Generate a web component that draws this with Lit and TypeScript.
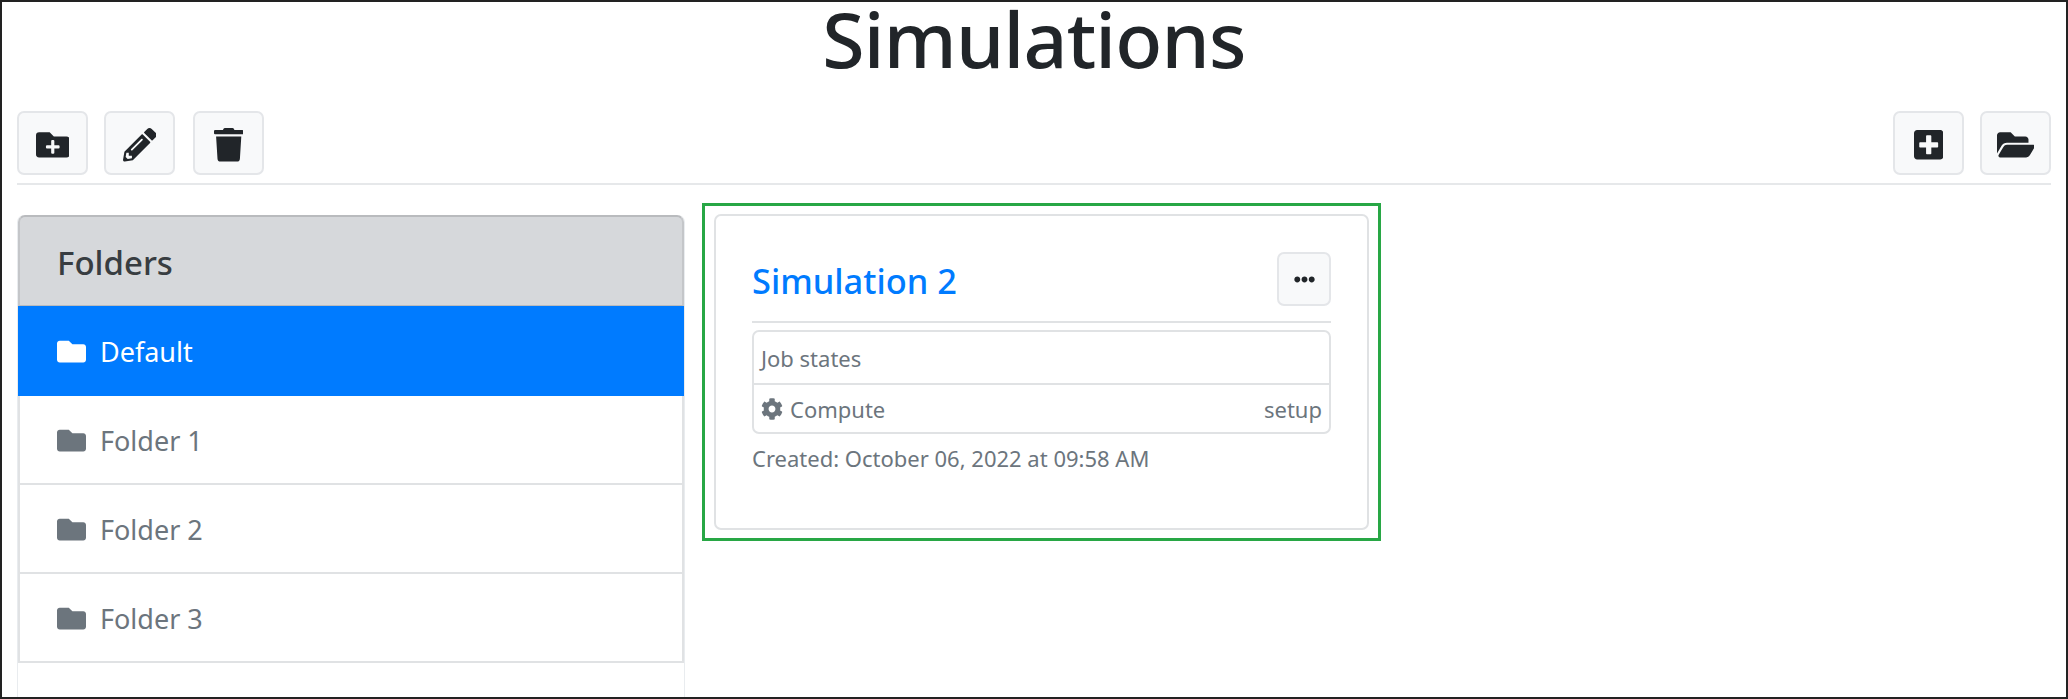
import {css, html, LitElement, svg} from 'lit';
import {customElement} from 'lit/decorators.js';

const icons = {
  folderPlus: {w: 512, d: 'M464,128H272L208,64H48A48,48,0,0,0,0,112V400a48,48,0,0,0,48,48H464a48,48,0,0,0,48-48V176A48,48,0,0,0,464,128ZM359.5,296a16,16,0,0,1-16,16h-64v64a16,16,0,0,1-16,16h-16a16,16,0,0,1-16-16V312h-64a16,16,0,0,1-16-16V280a16,16,0,0,1,16-16h64V200a16,16,0,0,1,16-16h16a16,16,0,0,1,16,16v64h64a16,16,0,0,1,16,16Z'},
  pencil: {w: 512, d: 'M497.9 142.1l-46.1 46.1c-4.7 4.7-12.3 4.7-17 0l-111-111c-4.7-4.7-4.7-12.3 0-17l46.1-46.1c18.7-18.7 49.1-18.7 67.9 0l60.1 60.1c18.8 18.7 18.8 49.1 0 67.9zM284.2 99.8L21.6 362.4.4 483.9c-2.9 16.4 11.4 30.6 27.8 27.8l121.5-21.3 262.6-262.6c4.7-4.7 4.7-12.3 0-17l-111-111c-4.8-4.7-12.4-4.7-17.1 0zM124.1 339.9c-5.5-5.5-5.5-14.3 0-19.8l154-154c5.5-5.5 14.3-5.5 19.8 0s5.5 14.3 0 19.8l-154 154c-5.5 5.5-14.3 5.5-19.8 0zM88 424h48v36.3l-64.5 11.3-31.1-31.1L51.7 376H88v48z'},
  trash: {w: 448, d: 'M432 32H312l-9.4-18.7A24 24 0 0 0 281.1 0H166.8a23.72 23.72 0 0 0-21.4 13.3L136 32H16A16 16 0 0 0 0 48v32a16 16 0 0 0 16 16h416a16 16 0 0 0 16-16V48a16 16 0 0 0-16-16zM53.2 467a48 48 0 0 0 47.9 45h245.8a48 48 0 0 0 47.9-45L416 128H32z'},
  plusSquare: {w: 448, d: 'M400 32H48C21.5 32 0 53.5 0 80v352c0 26.5 21.5 48 48 48h352c26.5 0 48-21.5 48-48V80c0-26.5-21.5-48-48-48zm-32 252c0 6.6-5.4 12-12 12h-92v92c0 6.6-5.4 12-12 12h-56c-6.6 0-12-5.4-12-12v-92H92c-6.6 0-12-5.4-12-12v-56c0-6.6 5.4-12 12-12h92v-92c0-6.6 5.4-12 12-12h56c6.6 0 12 5.4 12 12v92h92c6.6 0 12 5.4 12 12v56z'},
  folderOpen: {w: 576, d: 'M572.694 292.093L500.27 416.248A63.997 63.997 0 0 1 444.989 448H45.025c-18.523 0-30.064-20.093-20.731-36.093l72.424-124.155A64 64 0 0 1 152 256h399.964c18.523 0 30.064 20.093 20.73 36.093zM152 224h328v-48c0-26.51-21.49-48-48-48H272l-64-64H48C21.49 64 0 85.49 0 112v278.046l69.077-118.418C86.214 242.25 117.989 224 152 224z'},
  folder: {w: 512, d: 'M464 128H272l-64-64H48C21.49 64 0 85.49 0 112v288c0 26.51 21.49 48 48 48h416c26.51 0 48-21.49 48-48V176c0-26.51-21.49-48-48-48z'},
  cog: {w: 512, d: 'M487.4 315.7l-42.6-24.6c4.3-23.2 4.3-47 0-70.2l42.6-24.6c4.9-2.8 7.1-8.6 5.5-14-11.1-35.6-30-67.8-54.7-94.6-3.8-4.1-10-5.1-14.8-2.3L380.8 110c-17.9-15.4-38.5-27.3-60.8-35.1V25.8c0-5.6-3.9-10.5-9.4-11.7-36.7-8.2-74.3-7.8-109.2 0-5.5 1.2-9.4 6.1-9.4 11.7V75c-22.2 7.9-42.8 19.8-60.8 35.1L88.7 85.5c-4.9-2.8-11-1.9-14.8 2.3-24.7 26.7-43.6 58.9-54.7 94.6-1.7 5.4.6 11.2 5.5 14L67.3 221c-4.3 23.2-4.3 47 0 70.2l-42.6 24.6c-4.9 2.8-7.1 8.6-5.5 14 11.1 35.6 30 67.8 54.7 94.6 3.8 4.1 10 5.1 14.8 2.3l42.6-24.6c17.9 15.4 38.5 27.3 60.8 35.1v49.2c0 5.6 3.9 10.5 9.4 11.7 36.7 8.2 74.3 7.8 109.2 0 5.5-1.2 9.4-6.1 9.4-11.7v-49.2c22.2-7.9 42.8-19.8 60.8-35.1l42.6 24.6c4.9 2.8 11 1.9 14.8-2.3 24.7-26.7 43.6-58.9 54.7-94.6 1.5-5.5-.7-11.3-5.6-14.1zM256 336c-44.1 0-80-35.9-80-80s35.9-80 80-80 80 35.9 80 80-35.9 80-80 80z'},
  ellipsis: {w: 512, d: 'M328 256c0 39.8-32.2 72-72 72s-72-32.2-72-72 32.2-72 72-72 72 32.2 72 72zm104-72c-39.8 0-72 32.2-72 72s32.2 72 72 72 72-32.2 72-72-32.2-72-72-72zm-352 0c-39.8 0-72 32.2-72 72s32.2 72 72 72 72-32.2 72-72-32.2-72-72-72z'},
};

type IconName = keyof typeof icons;

function icon(name: IconName, cls = '') {
  const {w, d} = icons[name];
  return html`<svg class="icon ${cls}" viewBox="0 0 ${w} 512" fill="currentColor">${svg`<path d=${d}></path>`}</svg>`;
}

const folders = ['Default', 'Folder 1', 'Folder 2', 'Folder 3'];

@customElement('app-root')
export class AppRoot extends LitElement {
  render() {
    return html`
      <h1 class="title">Simulations</h1>
      <div class="toolbar">
        <div class="group">
          <button class="btn">${icon('folderPlus')}</button>
          <button class="btn">${icon('pencil')}</button>
          <button class="btn">${icon('trash')}</button>
        </div>
        <div class="group right">
          <button class="btn">${icon('plusSquare')}</button>
          <button class="btn">${icon('folderOpen')}</button>
        </div>
      </div>
      <div class="main">
        <aside class="sidebar">
          <div class="sidebar-head">Folders</div>
          ${folders.map(
            (name, i) => html`
              <div class="folder ${i === 0 ? 'active' : ''}">
                ${icon('folder')}<span>${name}</span>
              </div>
            `
          )}
        </aside>
        <div class="highlight">
          <div class="card">
            <div class="card-head">
              <a class="card-title">Simulation 2</a>
              <button class="btn more">${icon('ellipsis')}</button>
            </div>
            <div class="jobs">
              <div class="job-row">Job states</div>
              <div class="job-row split">
                <span class="compute">${icon('cog')}Compute</span>
                <span>setup</span>
              </div>
            </div>
            <div class="created">Created: October 06, 2022 at 09:58 AM</div>
          </div>
        </div>
      </div>
    `;
  }

  static styles = css`
    :host {
      display: block;
      box-sizing: border-box;
      width: 2068px;
      height: 699px;
      border: 2px solid #222;
      overflow: hidden;
      padding: 0 15px;
      background: #fff;
      color: #212529;
      font-family: 'Noto Sans', 'Open Sans', sans-serif;
    }

    * {
      box-sizing: border-box;
    }

    .icon {
      display: block;
      height: 33.6px;
    }

    .title {
      margin: 0;
      height: 109px;
      font-size: 77px;
      line-height: 74px;
      font-weight: 500;
      text-align: center;
      letter-spacing: -0.8px;
    }

    .toolbar {
      display: flex;
      justify-content: space-between;
      height: 74px;
      padding-bottom: 8px;
      border-bottom: 2px solid #e6e8ea;
    }

    .group {
      display: flex;
      gap: 16px;
    }

    .group .btn:nth-child(3) {
      margin-left: 2px;
    }

    .btn {
      display: flex;
      align-items: center;
      justify-content: center;
      width: 71px;
      height: 64px;
      padding: 4px 0 0;
      background: #f8f9fa;
      border: 2px solid #e4e6e9;
      border-radius: 7px;
      color: #212529;
    }

    .main {
      display: flex;
      align-items: flex-start;
      gap: 17px;
      padding-top: 18px;
    }

    .sidebar {
      flex: none;
      width: 668px;
      height: 600px;
      margin-top: 12px;
      border-radius: 7px 7px 0 0;
      border-left: 1px solid #e9ecef;
      border-right: 1px solid #e9ecef;
    }

    .sidebar-head {
      height: 91px;
      display: flex;
      align-items: center;
      padding-left: 37px;
      padding-top: 2px;
      background: #d6d8db;
      color: #383d41;
      font-size: 33px;
      font-weight: 500;
      border: 2px solid #c4c6c9;
      border-top-color: #b9bbbe;
      border-bottom: 1px solid #b9bbbe;
      border-radius: 7px 7px 0 0;
    }

    .folder {
      display: flex;
      align-items: center;
      gap: 14px;
      height: 89px;
      padding-left: 37px;
      padding-top: 1px;
      font-size: 27px;
      color: #6c757d;
      border: 2px solid #e0e2e4;
      border-top: 0;
    }

    .folder .icon {
      height: 29px;
      flex: none;
    }

    .folder.active {
      height: 90px;
      padding-top: 2px;
      background: #007bff;
      border-color: #007bff;
      color: #fff;
    }

    .highlight {
      flex: none;
      width: 679px;
      height: 338px;
      padding: 8px 9px;
      border: 3px solid #28a745;
    }

    .card {
      height: 100%;
      padding: 36px 36px 0;
      border: 2px solid #e0e2e4;
      border-radius: 7px;
      color: #6c757d;
    }

    .card-head {
      display: flex;
      align-items: center;
      justify-content: space-between;
      height: 71px;
      padding-bottom: 15px;
      border-bottom: 2px solid #e0e2e4;
    }

    .card-title {
      color: #007bff;
      font-size: 34.4px;
      font-weight: 500;
      padding-top: 2px;
    }

    .more {
      width: 54px;
      height: 54px;
      padding: 0;
    }

    .more .icon {
      height: 21px;
    }

    .jobs {
      margin-top: 7px;
      height: 104px;
      border: 2px solid #e0e2e4;
      border-radius: 7px;
      font-size: 22px;
    }

    .job-row {
      display: flex;
      align-items: center;
      height: 51px;
      padding: 0 7px;
    }

    .job-row.split {
      height: 49px;
      justify-content: space-between;
      border-top: 2px solid #e0e2e4;
    }

    .compute {
      display: flex;
      align-items: center;
      gap: 7px;
    }

    .compute .icon {
      height: 22px;
    }

    .created {
      margin-top: 9px;
      font-size: 22px;
    }
  `;
}
